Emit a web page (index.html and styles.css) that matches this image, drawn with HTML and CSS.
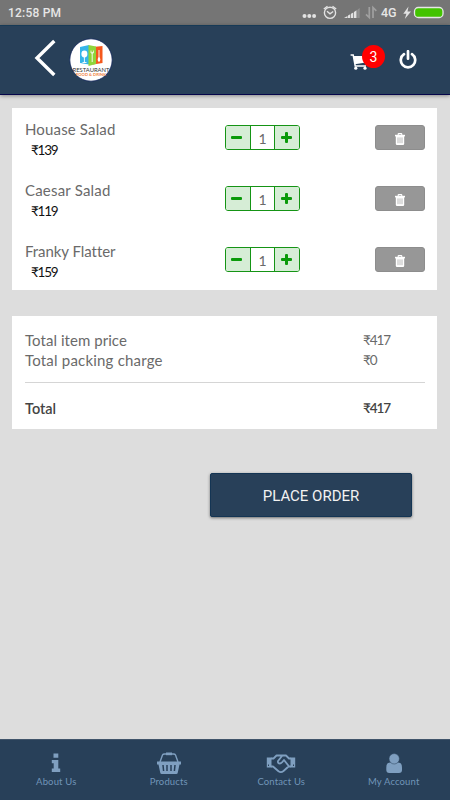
FILE: index.html
```html
<!DOCTYPE html>
<html lang="en">
<head>
    <meta charset="UTF-8">
    <meta name="viewport" content="width=device-width, initial-scale=1.0">
    <title>Cart</title>
    <link rel="stylesheet" href="styles.css">
</head>
<body>
    <svg class="defs">
        <symbol id="trash" viewBox="0 0 10 12">
            <path d="M3.2 2V1.2Q3.2.6 3.8.6H6.2Q6.8.6 6.8 1.2V2" fill="none" stroke="#fff" stroke-width="1.1"/>
            <path d="M0 1.800H10V3.400H0z" fill="#fff"/>
            <path d="M.8 3H9.2V10.8Q9.2 12 8 12H2Q.8 12 .8 10.8z" fill="#fff"/>
            <path d="M3 4.4V10.2M5 4.4V10.2M7 4.4V10.2" stroke="#aaa" stroke-width=".8"/>
        </symbol>
    </svg>
    <div class="status">
        <span class="time">12:58 PM</span>
        <svg class="status-icons" width="148" height="25" viewBox="302 0 148 25">
            <g fill="#e2e2e2">
                <circle cx="304.500" cy="16" r="2"/>
                <circle cx="309.300" cy="16" r="2"/>
                <circle cx="314.100" cy="16" r="2"/>
                <path d="M344 18L347.500 16V18zM348 15.500L350.300 14.300V18H348zM351 13.800L353.300 12.500V18H351zM354 12L356.500 10.300V18H354z"/>
                <path d="M408.500 6.500L403.300 13.800H406.400L404.800 19L411 11.600H407.500z"/>
            </g>
            <path d="M357.200 10L359.700 8V18H357.200z" fill="#919191"/>
            <g fill="none" stroke="#e2e2e2" stroke-width="1.400">
                <circle cx="330" cy="12.800" r="5.600"/>
                <path d="M327 11.300L330 13.900L333.200 11.500M323.800 9L327.500 6.200M336.200 9L332.500 6.200"/>
            </g>
            <path d="M369.300 7V17.500L366 14.300M373 18V7.500L376.300 10.800" fill="none" stroke="#a0a0a0" stroke-width="1.700"/>
            <rect x="414.500" y="7.500" width="28.500" height="10" rx="3.800" fill="#43c300" stroke="#e6e6e6" stroke-width="1.300"/>
            <text class="net" x="381" y="17.300">4G</text>
        </svg>
    </div>
    <div class="header">
        <svg class="back" width="22" height="38" viewBox="0 0 22 38">
            <path d="M20.300 2L3 19L20.300 36" fill="none" stroke="#fff" stroke-width="3.400"/>
        </svg>
        <svg class="logo" width="44" height="44" viewBox="0 0 44 44">
            <circle cx="22" cy="22" r="21.200" fill="#fff" stroke="#10245a" stroke-width=".8"/>
            <path d="M11 9L20 7V26.500L11 25z" fill="#35b5e9"/>
            <path d="M24 9L33.500 8V25L24 26.500z" fill="#f4581c"/>
            <path d="M19.500 7L27 8.500V26L19.500 28z" fill="#8fd53a"/>
            <ellipse cx="15.400" cy="16" rx="3" ry="3.400" fill="#fff"/>
            <path d="M15.400 18V24.500M13.500 24.500H17.500M23.200 14V24M30 12V20" stroke="#fff" stroke-width=".9"/>
            <path d="M22 12.500V15H24.400V12.500" fill="none" stroke="#fff" stroke-width=".8"/>
            <ellipse cx="30" cy="21.500" rx="1.300" ry="2.200" fill="#fff"/>
            <text class="logo-name" x="3.500" y="34" textLength="37" lengthAdjust="spacingAndGlyphs">RESTAURANT</text>
            <text class="logo-sub" x="7" y="37.500" textLength="30" lengthAdjust="spacingAndGlyphs">FOOD &amp; DRINK</text>
        </svg>
        <div class="cart">
            <svg width="18" height="16" viewBox="0 0 18 16">
                <path d="M.6 1H3.200L5.200 12H16" fill="none" stroke="#fff" stroke-width="1.500"/>
                <path d="M3.500 2H17.500L16 8.500L4.800 10.300z" fill="#fff"/>
                <circle cx="5.800" cy="14.200" r="1.600" fill="#fff"/>
                <circle cx="15" cy="14.200" r="1.600" fill="#fff"/>
            </svg>
            <span class="badge">3</span>
        </div>
        <svg class="power" width="18" height="19" viewBox="0 0 18 19">
            <path d="M5 4.200A7.200 7.200 0 1 0 13 4.200M9 1.200V8.700" fill="none" stroke="#fff" stroke-width="2.700" stroke-linecap="round"/>
        </svg>
    </div>
    <div class="content">
        <div class="card items">
            <div class="item">
                <div class="info">
                    <p class="name n1">Houase Salad</p>
                    <p class="price">₹139</p>
                </div>
                <div class="qty"><span class="btn minus"></span><span class="num">1</span><span class="btn plus"></span></div>
                <div class="del"><svg width="10" height="12"><use href="#trash"/></svg></div>
            </div>
            <div class="item">
                <div class="info">
                    <p class="name n2">Caesar Salad</p>
                    <p class="price">₹119</p>
                </div>
                <div class="qty"><span class="btn minus"></span><span class="num">1</span><span class="btn plus"></span></div>
                <div class="del"><svg width="10" height="12"><use href="#trash"/></svg></div>
            </div>
            <div class="item">
                <div class="info">
                    <p class="name n3">Franky Flatter</p>
                    <p class="price">₹159</p>
                </div>
                <div class="qty"><span class="btn minus"></span><span class="num">1</span><span class="btn plus"></span></div>
                <div class="del"><svg width="10" height="12"><use href="#trash"/></svg></div>
            </div>
        </div>
        <div class="card summary">
            <div class="line"><span class="t1">Total item price</span><span class="amount">₹417</span></div>
            <div class="line"><span class="t2">Total packing charge</span><span class="amount">₹0</span></div>
            <div class="line total"><span>Total</span><span class="amount">₹417</span></div>
        </div>
        <div class="order">PLACE ORDER</div>
    </div>
    <div class="footer">
        <div class="tab">
            <svg width="30" height="24" viewBox="0 0 30 24">
                <path d="M12.500 2.500H17.300V6.700H12.500zM10.800 9H17.300V17.500H19.200V21H10.800V17.500H12.700V12.300H10.800z" fill="#7f9fc0"/>
            </svg>
            <span>About Us</span>
        </div>
        <div class="tab">
            <svg width="30" height="24" viewBox="0 0 30 24">
                <path d="M6 11L8.500 4Q9 3 10.500 3H19.500Q21 3 21.500 4L24 11" fill="none" stroke="#7f9fc0" stroke-width="1.400"/>
                <path d="M12 1.500H18V4.200H12z" fill="#7f9fc0"/>
                <path d="M3 10.500H27V13.500H25.500L23.800 21.500Q23.600 23 22.200 23H7.800Q6.400 23 6.200 21.500L4.500 13.500H3z" fill="#7f9fc0"/>
                <path d="M9 14L9.600 20M13 14V20M17 14V20M21 14L20.400 20" stroke="#284059" stroke-width="1.500"/>
            </svg>
            <span>Products</span>
        </div>
        <div class="tab">
            <svg width="30" height="24" viewBox="0 0 30 24">
                <path d="M.8 6.500H5.500V16.500H.8zM24.500 6.500H29.200V16.500H24.500z" fill="#7f9fc0"/>
                <path d="M5 7.500H7.500L10.500 4.500H20L23 7.500H25M5 15.500H7L12.500 20.300Q15 22 17.500 20L22.500 15.500H25M16 5L12 10Q11.500 12.500 14 12.500Q15.500 12.500 18 9L22.700 15" fill="none" stroke="#7f9fc0" stroke-width="1.800" stroke-linejoin="round"/>
                <path d="M2.500 13.500V15M27.500 13.500V15" stroke="#284059"/>
            </svg>
            <span>Contact Us</span>
        </div>
        <div class="tab">
            <svg width="30" height="24" viewBox="0 0 30 24">
                <path d="M11 11.500Q7.300 11.500 7.300 16.500V19Q7.300 22 10.300 22H20Q23 22 23 19V16.500Q23 11.500 19.300 11.500z" fill="#7f9fc0"/>
                <circle cx="15.200" cy="7.800" r="5.200" fill="#7f9fc0" stroke="#284059" stroke-width=".5"/>
            </svg>
            <span>My Account</span>
        </div>
    </div>
</body>
</html>
```
FILE: styles.css
```css
*{
    padding: 0;
    margin: 0;
    box-sizing: border-box;
}
body{
    width:450px;
    height:800px;
    display:flex;
    flex-direction:column;
    overflow:hidden;
    background-color:#ddd;
    font-family:Lato, "Noto Sans", sans-serif;
}
svg{
    display:block;
    flex:none;
}
.defs{
    display:none;
}
.status{
    height:25px;
    flex:none;
    display:flex;
    justify-content:space-between;
    background-color:#757575;
}
.time{
    padding-left:8px;
    line-height:26px;
    font-family:Roboto, sans-serif;
    font-size:12px;
    font-weight:500;
    letter-spacing:0.2px;
    color:#e6e6e6;
}
.net{
    font-family:Roboto, sans-serif;
    font-size:12.5px;
    font-weight:500;
    fill:#e6e6e6;
}
.header{
    height:70px;
    flex:none;
    display:flex;
    align-items:center;
    padding-left:34px;
    background-color:#284059;
    border-top:1px solid #173a56;
    border-bottom:1px solid #05054a;
    box-shadow:0 1px 4px rgba(0,0,0,0.4);
}
.back{
    margin-bottom:4px;
}
.logo{
    margin-left:13px;
}
.logo-name{
    font-family:Lato, sans-serif;
    font-size:6.5px;
    fill:#333;
}
.logo-sub{
    font-size:3.5px;
    font-weight:700;
    fill:#f0803c;
}
.cart{
    width:36px;
    margin-left:237px;
    padding-top:4px;
    position:relative;
}
/* sits over the corner of the cart */
.badge{
    width:23px;
    height:23px;
    position:absolute;
    top:-5px;
    left:12px;
    border-radius:50%;
    background-color:#f00;
    color:#fff;
    font-family:Roboto, sans-serif;
    font-size:14px;
    line-height:24px;
    text-align:center;
}
.power{
    margin-left:13px;
    margin-bottom:2px;
}
.content{
    flex:1;
    padding:13px 13px 0 12px;
}
.card{
    background-color:#fff;
    padding:0 12px 0 13px;
    font-size:15px;
    color:#6a6a6a;
}
.items{
    height:182px;
}
.item{
    height:61px;
    display:flex;
    align-items:flex-start;
    padding-top:12px;
}
.info{
    width:200px;
    margin-top:-1px;
    line-height:20px;
}
.name{
    white-space:nowrap;
}
.n1{
    letter-spacing:0.15px;
}
.n2{
    letter-spacing:0.2px;
}
.n3{
    letter-spacing:-0.05px;
}
.price{
    padding-left:6px;
    font-size:13.5px;
    line-height:22px;
    letter-spacing:-1.2px;
    color:#111;
}
.qty{
    width:75px;
    height:25px;
    margin-top:5px;
    display:flex;
    border:1px solid #159415;
    border-radius:3px;
    overflow:hidden;
}
.btn{
    width:24px;
    display:flex;
    align-items:center;
    justify-content:center;
    background-color:#d6edd6;
}
.btn:before{
    content:"";
    width:11px;
    height:3px;
    border-radius:1px;
    background-color:#0a9a0a;
}
.minus:before{
    margin-right:3px;
}
.plus:before{
    margin-right:2px;
}
.plus:after{
    content:"";
    width:3px;
    height:11px;
    margin-left:-9px;
    margin-right:5px;
    border-radius:1px;
    background-color:#0a9a0a;
}
.num{
    flex:1;
    border-left:1px solid #159415;
    border-right:1px solid #159415;
    text-align:center;
    font-size:14px;
    line-height:25px;
}
.del{
    width:50px;
    height:25px;
    margin-top:5px;
    margin-left:75px;
    padding-top:2px;
    display:flex;
    align-items:center;
    justify-content:center;
    border:1px solid #8d8d8d;
    border-radius:3px;
    background-color:#979797;
}
.summary{
    height:113px;
    margin-top:26px;
    padding-top:14px;
}
.line{
    height:20px;
    display:flex;
    justify-content:space-between;
    line-height:21px;
}
.amount{
    width:62px;
    font-size:13.5px;
    letter-spacing:-1.1px;
}
.t1{
    letter-spacing:0.05px;
}
.t2{
    letter-spacing:0.2px;
}
.total{
    height:40px;
    margin-top:12px;
    padding-top:15px;
    border-top:1px solid #d5d5d5;
    color:#444;
    font-size:14.5px;
    font-weight:600;
}
.order{
    width:202px;
    height:44px;
    margin:44px 0 0 198px;
    border:1px solid #143554;
    border-radius:2px;
    background-color:#284059;
    box-shadow:0 1px 3px rgba(0,0,0,0.5);
    color:#f2f2f2;
    font-family:Roboto, sans-serif;
    font-size:15px;
    line-height:44px;
    text-align:center;
}
.footer{
    height:61px;
    flex:none;
    display:flex;
    border-top:1px solid #40546a;
    background-color:#284059;
}
.tab{
    flex:1;
    display:flex;
    flex-direction:column;
    align-items:center;
    padding-top:11px;
    font-size:9.5px;
    line-height:14px;
    letter-spacing:0.15px;
    color:#7195b8;
}
```
